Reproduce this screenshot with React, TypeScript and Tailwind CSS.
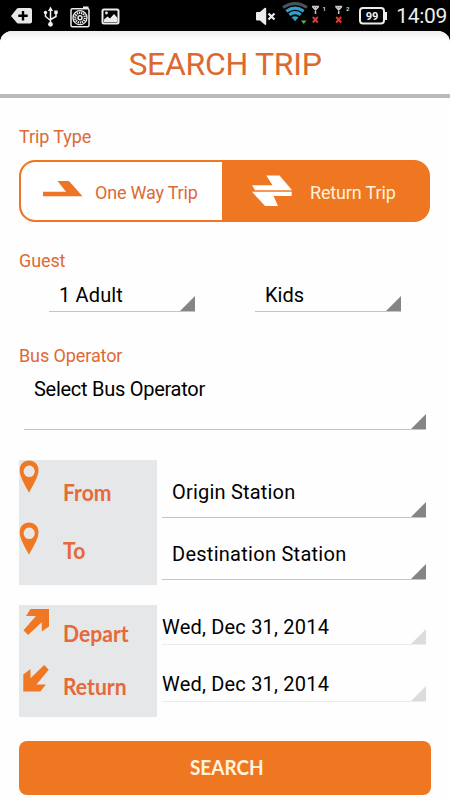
import clsx from "clsx";

interface SpinnerProps {
  value: string;
  className?: string;
  textClassName?: string;
  light?: boolean;
}

function Spinner({ value, className, textClassName, light }: SpinnerProps) {
  return (
    <button
      className={clsx(
        "flex items-end justify-between border-b text-left text-[20px] leading-6 text-black",
        light ? "border-[#ebebeb]" : "border-[#c4c4c4]",
        className,
      )}
    >
      <span className={clsx("whitespace-nowrap", textClassName)}>{value}</span>
      <svg width="15" height="15" viewBox="0 0 15 15" className="shrink-0">
        <path d="M15 0V15H0Z" fill={light ? "#dcdcdc" : "#858585"} />
      </svg>
    </button>
  );
}

function Label({ children, className }: { children: string; className?: string }) {
  return (
    <h2 className={clsx("text-[18px] leading-6 tracking-[-0.1px] text-[#dd6a35]", className)}>{children}</h2>
  );
}

function Pin() {
  return (
    <svg width="20" height="33" viewBox="0 0 20 33" className="shrink-0">
      <path
        fillRule="evenodd"
        fill="#f07824"
        d="M10 .5C4.600 .5 .700 4.600 .700 10C.700 17 6 25 10 32.700C14 25 19.500 17 19.500 10C19.500 4.600 15.500 .5 10 .5ZM10.200 5.500A5.600 5.800 0 1 1 10.200 17.100A5.600 5.800 0 1 1 10.200 5.500Z"
      />
    </svg>
  );
}

function DepartArrow() {
  return (
    <svg width="26" height="27" viewBox="0 0 26 27" className="shrink-0">
      <path fill="#f07824" d="M7.500 0H26V17.500L18.800 22.500V13.300L5 26L.500 21.300L13 7H3Z" />
    </svg>
  );
}

function ReturnArrow() {
  return (
    <svg width="26" height="27" viewBox="0 0 26 27" className="-mt-px shrink-0">
      <path fill="#f07824" d="M21.200 0L25.700 4.800L13.500 19.500H23L17.300 26.500H.300V9.500L7.500 4V13.300Z" />
    </svg>
  );
}

function StatusBar() {
  return (
    <header className="flex h-[31px] items-center justify-between bg-black pl-[10px] pr-[3px]">
      <svg width="112" height="31" viewBox="0 0 112 31">
        <path d="M1 16L7 8.500Q7.500 8 9 8H20Q22 8 22 10V21.500Q22 23.500 20 23.500H9Q7.500 23.500 7 23Z" fill="#e8e8e8" />
        <path d="M13 11V20.500M8.300 15.700H17.700" stroke="#000" strokeWidth="2.400" />
        <g stroke="#f2f2f2" strokeWidth="1.500" fill="none">
          <path d="M40.500 10V25M35.500 12V16.500L40.500 20.500M46 13V16.500L40.500 19.500" />
        </g>
        <path d="M40.500 6.500L43 11H38Z" fill="#f2f2f2" />
        <circle cx="40.500" cy="24.300" r="2.400" fill="#f2f2f2" />
        <circle cx="35.500" cy="12.500" r="1.700" fill="#f2f2f2" />
        <path d="M44.300 10.500H47.700V14H44.300Z" fill="#f2f2f2" />
        <g fill="none" stroke="#ececec">
          <rect x="61" y="8.700" width="18" height="18" rx="1.500" strokeWidth="1.500" />
          <circle cx="70" cy="17.700" r="7" strokeWidth="1.300" />
          <circle cx="70" cy="17.700" r="4.800" strokeWidth="2.200" strokeDasharray="1.300 .8" />
          <circle cx="70" cy="17.700" r="2" strokeWidth="1.500" />
        </g>
        <path d="M73 6.500H78.500V9H73Z" fill="#ececec" />
        <rect x="92.500" y="9.500" width="16" height="14" rx="1.500" fill="none" stroke="#ececec" strokeWidth="2" />
        <path d="M94 22V19.500L97.500 16.500L100 18.500L104 14L107.500 18V22Z" fill="#ececec" />
        <circle cx="96.500" cy="13" r="1.400" fill="#ececec" />
      </svg>
      <div className="flex items-center">
        <svg width="134" height="31" viewBox="0 0 134 31">
          <path d="M1 13Q1 12 2 12H5L9.500 8Q11.200 7 11.200 9V24Q11.200 25.500 9.500 24.500L5 20.500H2Q1 20.500 1 19.500Z" fill="#ececec" />
          <path d="M13.500 13.500L19.500 19.500M19.500 13.500L13.500 19.500" stroke="#ececec" strokeWidth="2.200" />
          <g fill="none" strokeWidth="3">
            <path d="M28 7.500Q40 -.500 52 7.500" stroke="#47545b" />
            <path d="M31.300 11.200Q40 5 48.700 11.200" stroke="#349fcd" />
            <path d="M34.300 14.800Q40 10.500 45.700 14.800" stroke="#349fcd" />
          </g>
          <path d="M36.500 17.300Q40 15 43.500 17.300L40 21.200Z" fill="#349fcd" />
          <path d="M46 20.500H51.500L48.700 24Z" fill="#56b947" />
          <g fill="none" stroke="#c9c9c9" strokeWidth="1.500">
            <path d="M57 6.500H64M57.700 7L60.500 10L63.300 7M60.500 6.500V14" />
            <path d="M80.200 6.500H87.200M81 7L83.700 10L86.500 7M83.700 6.500V14" />
          </g>
          <path d="M57.800 17L62.800 22.500M62.800 17L57.800 22.500M81.200 17L86.200 22.500M86.200 17L81.200 22.500" stroke="#e03a34" strokeWidth="1.900" />
          <text x="67.500" y="10.500" fontSize="6" fill="#ddd" fontWeight="700" fontFamily="Roboto, sans-serif">1</text>
          <text x="91" y="10.500" fontSize="6" fill="#ddd" fontWeight="700" fontFamily="Roboto, sans-serif">2</text>
          <rect x="105" y="8" width="24" height="15.500" rx="3" fill="none" stroke="#ececec" strokeWidth="2" />
          <path d="M129.500 12H132V20H129.500Z" fill="#ececec" />
          <text x="117" y="19.600" fontSize="11" fill="#f2f2f2" fontWeight="700" textAnchor="middle" fontFamily="Roboto, sans-serif">99</text>
        </svg>
        <span className="ml-[7px] mt-0.5 text-[21px] leading-none tracking-[-0.3px] text-[#eee]">14:09</span>
      </div>
    </header>
  );
}

const panelText =
  "inline-block origin-left scale-x-96 font-['Lato',sans-serif] text-[22px] font-bold leading-6 text-[#e5693a]";

export default function App() {
  return (
    <div className="h-[800px] w-[450px] overflow-hidden bg-black font-['Roboto',sans-serif]">
      <StatusBar />
      <div className="flex h-[769px] flex-col rounded-t-xl bg-[#fefefe]">
        <div className="flex h-[67px] shrink-0 items-center justify-center rounded-t-xl border-b-4 border-[#bababa] bg-gradient-to-b from-[#eeeeee] via-white via-15% to-white pt-0.5">
          <h1 className="text-[32px] leading-none tracking-[-0.3px] text-[#dc6930]">SEARCH TRIP</h1>
        </div>

        <main className="flex flex-col pl-[19px] pr-5 pt-[27px]">
          <Label>Trip Type</Label>
          <div className="mt-[11px] flex h-[62px] overflow-hidden rounded-2xl border-[2px] border-[#ee7722] bg-[#f07722]">
            <button className="flex w-[201px] items-center rounded-l-[14px] bg-white pl-[22px] text-[18px] text-[#dd6a35]">
              <svg width="40" height="16" viewBox="0 0 40 16" className="-mt-[5px]">
                <path d="M0 10.700H23L14.500 0H26L39.500 15.300H0Z" fill="#ee7526" />
              </svg>
              <span className="ml-3 mt-0.5 tracking-[-0.2px]">One Way Trip</span>
            </button>
            <button className="flex flex-1 items-center pl-[30px] text-[18px] text-[#fff2dd]">
              <svg width="40" height="32" viewBox="0 0 40 32">
                <path d="M0 10.200H20.500L14.300 .500H27.500L39.700 14.800V15.200H3ZM0 16.700H39.700V21H21.500L26 31H13Z" fill="#fff" />
              </svg>
              <span className="ml-[18px] mt-0.5 tracking-[-0.15px]">Return Trip</span>
            </button>
          </div>

          <Label className="mt-[27px]">Guest</Label>
          <div className="flex pl-[30px]">
            <Spinner value="1 Adult" className="h-[39px] w-[146px] pl-[10px]" textClassName="pb-1 tracking-[0.15px]" />
            <Spinner value="Kids" className="ml-[60px] h-[39px] w-[146px] pl-[10px]" textClassName="pb-1" />
          </div>

          <Label className="mt-8">Bus Operator</Label>
          <Spinner value="Select Bus Operator" className="ml-[5px] h-[62px] w-[402px] pl-[10px]" textClassName="pb-7 tracking-[-0.27px]" />

          <div className="mt-[30px] flex h-[125px]">
            <div className="flex w-[138px] flex-col bg-[#e6e7e8]">
              <div className="flex h-[62px]">
                <Pin />
                <span className={clsx(panelText, "ml-6 mt-[21px]")}>From</span>
              </div>
              <div className="flex h-[63px]">
                <Pin />
                <span className={clsx(panelText, "ml-6 mt-[17px]")}>To</span>
              </div>
            </div>
            <div className="ml-[5px] flex flex-col">
              <Spinner value="Origin Station" className="h-[58px] w-[264px] pl-[10px]" textClassName="pb-[13px] tracking-[0.2px]" />
              <Spinner value="Destination Station" className="mt-[4px] h-[58px] w-[264px] pl-[10px]" textClassName="pb-[13px] tracking-[0.27px]" />
            </div>
          </div>

          <div className="mt-5 flex h-[112px]">
            <div className="flex w-[138px] flex-col bg-[#e6e7e8] pl-1 pt-1">
              <div className="flex h-[57px]">
                <DepartArrow />
                <span className={clsx(panelText, "ml-[14px] mt-[13px]")}>Depart</span>
              </div>
              <div className="flex">
                <ReturnArrow />
                <span className={clsx(panelText, "ml-[14px] mt-[9px]")}>Return</span>
              </div>
            </div>
            <div className="ml-[5px] flex flex-col">
              <Spinner light value="Wed, Dec 31, 2014" className="h-10 w-[264px]" textClassName="pb-[5px] tracking-[0.2px]" />
              <Spinner light value="Wed, Dec 31, 2014" className="mt-[17px] h-10 w-[264px]" textClassName="pb-[5px] tracking-[0.2px]" />
            </div>
          </div>

          <button className="mt-6 flex h-[54px] w-[412px] items-center justify-center rounded-lg bg-[#f07722] pb-[3px] pl-[3px]">
            <span className="inline-block scale-x-95 font-['Lato',sans-serif] text-[20px] font-bold leading-none text-[#fff3df]">
              SEARCH
            </span>
          </button>
        </main>
      </div>
    </div>
  );
}
